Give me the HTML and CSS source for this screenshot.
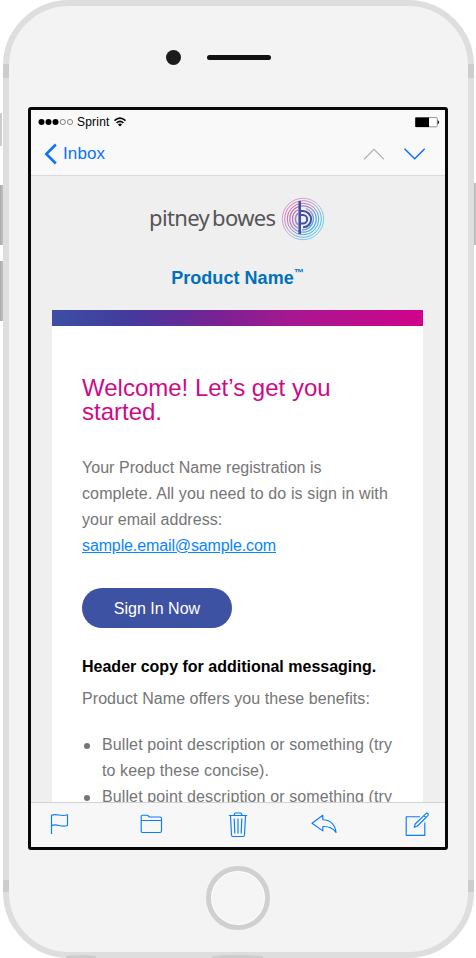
FILE: index.html
```html
<!DOCTYPE html>
<html lang="en">
<head>
<meta charset="utf-8">
<title>Product Name registration</title>
<link rel="stylesheet" href="styles.css">
</head>
<body>
<div class="device">
  <i class="key mute"></i><i class="key vol-up"></i><i class="key vol-down"></i><i class="key power"></i>
  <div class="shell">
    <i class="band tl"></i><i class="band tr"></i><i class="band bl"></i><i class="band br"></i>
    <i class="port left"></i><i class="port mid"></i>
    <div class="bezel"><i class="camera"></i><i class="speaker"></i></div>
    <div class="screen">
      <header class="topbar">
        <div class="status">
          <svg class="signal" width="36" height="8" viewBox="0 0 36 8"><g fill="#000"><circle cx="3.5" cy="4" r="3"/><circle cx="10.5" cy="4" r="3"/><circle cx="17.5" cy="4" r="3"/></g><g fill="none" stroke="#555" stroke-width=".7"><circle cx="24.8" cy="4" r="2.6"/><circle cx="32" cy="4" r="2.6"/></g></svg>
          <span class="carrier">Sprint</span>
          <svg class="wifi" width="12" height="10" viewBox="0 0 12 10"><g fill="none" stroke="#000" stroke-width="1.5"><path d="M.5 3.6Q6-1.4 11.5 3.6"/><path d="M2.6 5.9Q6 2.9 9.4 5.9"/></g><path d="M4 7.4Q6 5.8 8 7.4L6 9.4Z"/></svg>
          <svg class="battery" width="25" height="11" viewBox="0 0 25 11"><rect x=".5" y=".6" width="21.8" height="9.2" rx="1" fill="#fff" stroke="#777" stroke-width=".8"/><path d="M.3.5H14V10H.3Z"/><path d="M23 3.7q1.6 1.5 0 3Z" stroke="#000" stroke-width=".6"/></svg>
        </div>
        <nav class="nav">
          <svg width="13" height="22" viewBox="0 0 13 22" fill="none" stroke="#0a72ff" stroke-width="2.6"><path d="M11.8 1.5L2.3 11L11.8 20.5"/></svg>
          <span class="back">Inbox</span>
          <svg class="arrows" width="63" height="14" viewBox="0 0 63 14" fill="none"><path d="M1 12.3L11 2.3L21 12.3" stroke="#aaa" stroke-width="1.1"/><path d="M41.5 1.8L51.7 11.8L61.7 1.8" stroke="#0a6cff" stroke-width="1.5"/></svg>
        </nav>
      </header>
      <main class="mail">
        <div class="brand">
          <span class="wordmark">pitney bowes</span>
          <svg class="rings" width="44" height="44" viewBox="-22 -22 44 44" fill="none">
            <defs><linearGradient id="ring" gradientUnits="userSpaceOnUse" x1="-14" y1="-12" x2="13" y2="10"><stop offset="0" stop-color="#d65aa5"/><stop offset=".45" stop-color="#a487c8"/><stop offset="1" stop-color="#22b8f0"/></linearGradient></defs>
            <g stroke="url(#ring)"><circle r="20.7" stroke-width=".6"/><circle r="18.3" stroke-width=".8"/><circle r="15.8" stroke-width="1"/><circle r="13.2" stroke-width="1.2"/><path d="M-5-9.3A10.6 10.6 0 0 0-5 9.3M-1 10.9A11 11 0 0 0 3-10.5" stroke-width="1.3"/><path d="M-5-5.8A7.7 7.7 0 0 0-5 5.8" stroke-width="1.6"/></g>
            <path d="M-3.3-18V15" stroke="#3e50a3" stroke-width="2.6"/>
            <path d="M-3.3-7.9H0A8.1 8.1 0 0 1 0 8.3M-3.3-3.9H0A4.2 4.2 0 0 1 0 4.5H-3.3" stroke="#3e50a3" stroke-width="2"/>
          </svg>
        </div>
        <h2 class="product">Product Name<span class="tm">™</span></h2>
        <article class="card">
          <h1>Welcome! Let’s get you started.</h1>
          <p class="copy"><span class="l1">Your Product Name registration is</span><br>complete. All you need to do is sign in with<br><span class="l1">your email address:</span><br><a>sample.email@sample.com</a></p>
          <span class="button">Sign In Now</span>
          <h3>Header copy for additional messaging.</h3>
          <p class="lead">Product Name offers you these benefits:</p>
          <ul>
            <li>Bullet point description or something (try<br>to keep these concise).</li>
            <li>Bullet point description or something (try</li>
          </ul>
        </article>
      </main>
      <footer class="toolbar">
        <svg class="flag" width="20" height="22" viewBox="0 0 20 22"><path d="M1.5 21V2.3C6-.2 11 4.2 17.5 1.8V12.5C11 15 6.5 9.8 1.5 12.7"/></svg>
        <svg class="folder" width="23" height="20" viewBox="0 0 23 20"><path d="M1.2 17V2.6Q1.2 1.2 2.5 1.2H7.5L9.5 3H20Q21.5 3 21.5 4.5V17Q21.5 18.5 20 18.5H2.7Q1.2 18.5 1.2 17ZM1.2 6.5H21.5"/></svg>
        <svg class="trash" width="20" height="27" viewBox="0 0 20 27"><path d="M.8 4.5H19.2M6 4.2L7 2H13L14 4.2M2.5 4.7L3.5 24Q3.6 25.5 5 25.5H15Q16.4 25.5 16.5 24L17.5 4.7M6.2 7.5L6.8 22.5M10 7.5V22.5M13.8 7.5L13.2 22.5"/></svg>
        <svg class="reply" width="26" height="20" viewBox="0 0 26 20"><path d="M1 9.2L11.8 1.3V5.8C20 6 24.5 11.5 25 18.5C22 13.8 18 12.3 11.8 12.5V16.9Z"/></svg>
        <svg class="compose" width="24" height="25" viewBox="0 0 24 25"><path d="M15 4.7H1.2V23.3H19.8V10.5"/><path d="M9.2 15.3L10.2 12L20.7 1.8Q22 .6 23.2 1.8Q23.7 2.6 22.8 3.6L12.5 14ZM18.8 3.6L21 5.6"/></svg>
      </footer>
    </div>
    <div class="home"></div>
  </div>
</div>
</body>
</html>
```
FILE: styles.css
```css
* { box-sizing: border-box; }
body { margin: 0; background: #fff; font-family: "Liberation Sans", Arial, sans-serif; overflow: hidden; }
svg { display: block; overflow: visible; flex: none; }
.device { position: relative; width: 476px; height: 958px; overflow: hidden; }
.shell { position: relative; width: 471px; height: 958px; margin-left: 3px; border: 6px solid #dedede; border-radius: 66px; background: #f3f3f3; display: flex; flex-direction: column; align-items: flex-start; }
.key { position: absolute; background: linear-gradient(90deg, #aaa, #c9c9c9); }
.mute { left: 0; top: 113px; width: 2px; height: 33px; background: #ccc; }
.vol-up { left: 0; top: 185px; width: 4px; height: 60px; }
.vol-down { left: 0; top: 261px; width: 4px; height: 60px; }
.power { right: 0; top: 183px; width: 3px; height: 62px; }
.band { position: absolute; width: 6px; height: 14px; background: #cdcdcd; }
.tl, .bl { left: -6px; }
.tr, .br { right: -6px; }
.tl, .tr { top: 58px; }
.bl, .br { bottom: 60px; height: 12px; }
.port { position: absolute; height: 3px; bottom: -6px; background: #cdcdcd; border-radius: 50% 50% 0 0; }
.port.left { left: 57px; width: 30px; }
.port.mid { left: 203px; width: 51px; }
.bezel { width: 100%; height: 101px; padding: 44px 0 0 157px; display: flex; align-items: flex-start; flex: none; }
.camera { width: 15px; height: 15px; border-radius: 50%; background: #1c1c1c; }
.speaker { width: 64px; height: 5px; margin: 5px 0 0 26px; border-radius: 3px; background: #111; }
.screen { width: 420px; height: 743px; margin-left: 19px; flex: none; border: 3px solid #080808; border-radius: 3px; background: #efefef; display: flex; flex-direction: column; overflow: hidden; }
.topbar { height: 66px; flex: none; background: #f9f9f9; border-bottom: 1px solid #dadada; }
.status { display: flex; align-items: center; height: 24px; padding: 0 5px 0 7px; font-size: 12px; }
.carrier { margin-left: 3px; letter-spacing: .2px; }
.wifi { margin-left: 4px; }
.battery { margin-left: auto; }
.nav { display: flex; align-items: center; height: 40px; padding: 0 19px 0 13px; }
.back { margin-left: 6px; font-size: 17px; letter-spacing: .1px; color: #0a72ff; }
.arrows { margin-left: auto; }
.mail { flex: 1; min-height: 0; overflow: hidden; padding: 20px 22px 0 21px; }
.brand { display: flex; align-items: center; height: 44px; padding-left: 97px; }
.wordmark { width: 132px; white-space: nowrap; font-family: "Noto Sans", sans-serif; font-size: 22px; line-height: 30px; margin-top: -2px; letter-spacing: -.65px; word-spacing: -2px; color: #555; }
.rings { margin-top: 2px; }
.product { margin: 26px 0 0; height: 44px; text-align: center; font-size: 18px; line-height: 24px; letter-spacing: .05px; color: #0071b9; }
.tm { font-size: 10px; line-height: 1; position: relative; top: -8px; }
.card { height: 700px; padding: 66px 0 0 30px; background: linear-gradient(90deg, #3c4fa3, #45399c 22%, #792294 45%, #a81791 65%, #d0048a) top / 100% 16px no-repeat #fff; }
h1 { margin: 0; width: 270px; font-size: 24px; line-height: 24px; font-weight: 400; color: #cf0a88; }
.copy { margin: 31px 0 0; letter-spacing: .12px; }
.l1 { letter-spacing: .03px; }
.copy, .lead, ul { font-size: 16px; line-height: 26px; color: #757575; white-space: nowrap; }
a { color: #0a84ff; text-decoration: underline; letter-spacing: -.12px; }
.button { display: flex; align-items: center; justify-content: center; width: 150px; height: 40px; margin-top: 29px; padding-top: 1px; border-radius: 20px; background: #3e52a4; color: #fff; font-size: 16px; }
h3 { margin: 26px 0 0; font-size: 16px; line-height: 26px; color: #000; white-space: nowrap; }
.lead { margin: 6px 0 0; letter-spacing: .07px; }
ul { margin: 20px 0 0; padding-left: 20px; list-style: none; letter-spacing: .11px; }
li::before { content: ""; float: left; width: 6px; height: 6px; margin: 11px 0 0 -18px; border-radius: 50%; background: #757575; }
.toolbar { height: 45px; flex: none; display: flex; align-items: center; padding: 0 0 2px 19px; background: #f7f7f7; border-top: 1px solid #d2d2d2; }
.toolbar path { fill: none; stroke: #0a7cff; stroke-width: 1.15; stroke-linejoin: round; }
.folder { margin-left: 70px; }
.trash { margin-left: 65px; }
.reply { margin-left: 63px; }
.compose { margin-left: 68px; }
.home { width: 64px; height: 64px; margin: 16px 0 0 197px; flex: none; border: 5px solid #d0d0d0; border-radius: 50%; background: #f5f5f5; box-shadow: inset 0 0 0 1px #fff; }
```
